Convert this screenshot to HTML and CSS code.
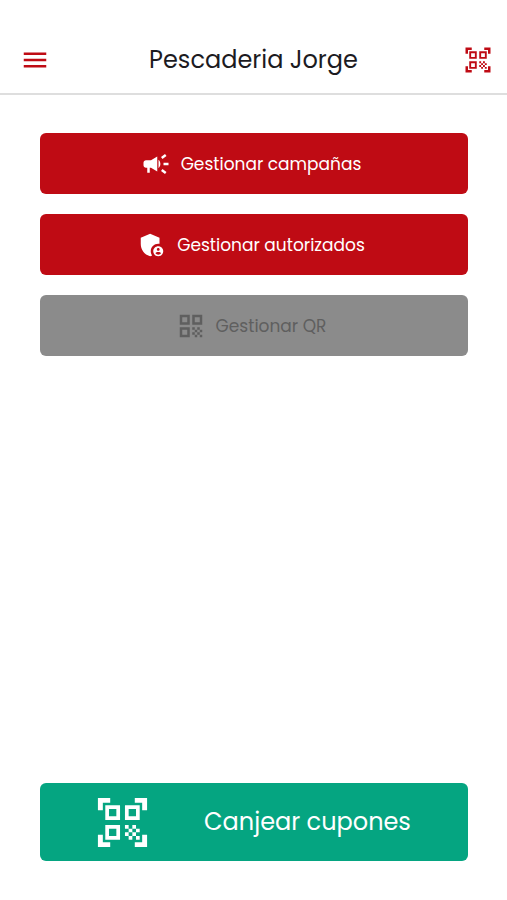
FILE: index.html
```html
<!DOCTYPE html>
<html lang="es">
<head>
<meta charset="utf-8">
<meta name="viewport" content="width=device-width, initial-scale=1">
<title>Pescaderia Jorge</title>
<link rel="stylesheet" href="styles.css">
</head>
<body>
<svg class="sprite" aria-hidden="true">
  <symbol id="scanner" viewBox="0 0 24 24"><path d="M9.5 6.5v3h-3v-3h3M11 5H5v6h6V5zm-1.500 9.500v3h-3v-3h3M11 13H5v6h6v-6zm6.500-6.500v3h-3v-3h3M19 5h-6v6h6V5zm-6 8h1.500v1.500H13V13zm1.500 1.500H16V16h-1.500v-1.500zM16 13h1.500v1.500H16V13zm-3 3h1.500v1.500H13V16zm1.500 1.500H16V19h-1.500v-1.500zM16 16h1.500v1.500H16V16zm1.500-1.500H19V16h-1.500v-1.500zm0 3H19V19h-1.500v-1.500zM22 7h-2V4h-3V2h5v5zm0 15v-5h-2v3h-3v2h5zM2 22h5v-2H4v-3H2v5zM2 2v5h2V4h3V2H2z"/></symbol>
</svg>
<header class="topbar">
  <button class="icon-button" type="button" aria-label="Menú">
    <svg class="icon" viewBox="0 0 24 24"><path d="M3 18h18v-2H3v2zm0-5h18v-2H3v2zm0-7v2h18V6H3z"/></svg>
  </button>
  <h1 class="title">Pescaderia Jorge</h1>
  <button class="icon-button" type="button" aria-label="Escanear QR">
    <svg class="icon"><use href="#scanner"/></svg>
  </button>
</header>
<main class="content">
  <button class="action" type="button">
    <svg class="icon" viewBox="0 0 24 24"><path d="M18 11v2h4v-2h-4zm-2 6.610c.96.71 2.210 1.650 3.200 2.390.4-.53.8-1.070 1.200-1.600-.99-.74-2.240-1.680-3.200-2.400-.4.54-.8 1.080-1.200 1.610zM20.400 5.600c-.4-.53-.8-1.070-1.200-1.600-.99.74-2.240 1.680-3.200 2.400.4.53.8 1.070 1.200 1.600.96-.72 2.210-1.650 3.200-2.400zM4 9c-1.100 0-2 .9-2 2v2c0 1.100.9 2 2 2h1v4h2v-4h1l5 3V6L8 9H4zm11.500 3c0-1.330-.58-2.530-1.500-3.350v6.690c.92-.81 1.500-2.010 1.500-3.340z"/></svg>
    <span>Gestionar campañas</span>
  </button>
  <button class="action" type="button">
    <svg class="icon" viewBox="0 0 24 24"><path d="M17 11c.34 0 .67.04 1 .09V6.270L10.500 3 3 6.270v4.910c0 4.540 3.200 8.790 7.500 9.820.55-.13 1.080-.32 1.600-.55-.69-.98-1.100-2.170-1.100-3.450 0-3.310 2.690-6 6-6z"/><path d="M17 13c-2.210 0-4 1.790-4 4s1.790 4 4 4 4-1.790 4-4-1.790-4-4-4zm0 1.380c.62 0 1.120.51 1.120 1.120s-.51 1.120-1.120 1.120-1.120-.51-1.120-1.120.5-1.120 1.120-1.120zm0 5.370c-.93 0-1.740-.46-2.240-1.170.05-.72 1.510-1.080 2.240-1.080s2.190.36 2.240 1.080c-.5.71-1.310 1.170-2.240 1.170z"/></svg>
    <span>Gestionar autorizados</span>
  </button>
  <button class="action" type="button" disabled>
    <svg class="icon" viewBox="0 0 24 24"><path d="M3 11h8V3H3v8zm2-6h4v4H5V5zM3 21h8v-8H3v8zm2-6h4v4H5v-4zm8-12v8h8V3h-8zm6 6h-4V5h4v4zM19 19h2v2h-2zM13 13h2v2h-2zM15 15h2v2h-2zM13 17h2v2h-2zM15 19h2v2h-2zM17 17h2v2h-2zM17 13h2v2h-2zM19 15h2v2h-2z"/></svg>
    <span>Gestionar QR</span>
  </button>
  <button class="action redeem" type="button">
    <svg class="icon"><use href="#scanner"/></svg>
    <span>Canjear cupones</span>
  </button>
</main>
</body>
</html>
```
FILE: styles.css
```css
* {
  box-sizing: border-box;
}

body {
  margin: 0;
  min-height: 100vh;
  display: flex;
  flex-direction: column;
  background: #fff;
  color: #1c1b1f;
  font-family: Poppins, Inter, sans-serif;
}

button {
  margin: 0;
  border: 0;
  font: inherit;
  cursor: pointer;
}

.sprite {
  position: absolute;
  width: 0;
  height: 0;
}

.icon {
  display: block;
  flex: none;
  width: 30px;
  height: 30px;
  fill: currentColor;
}

.topbar {
  display: flex;
  align-items: center;
  padding: 36px 14px 9px 20px;
  border-bottom: 2px solid #dedede;
}

.title {
  flex: 1;
  margin: 0;
  padding-right: 6px;
  text-align: center;
  font-size: 24px;
  line-height: 48px;
  font-weight: 400;
}

.icon-button {
  padding: 0;
  background: none;
  color: #bf0b14;
}

.content {
  flex: 1;
  display: flex;
  flex-direction: column;
  gap: 20px;
  padding: 38px 39px 39px 40px;
}

.action {
  display: flex;
  align-items: center;
  justify-content: center;
  gap: 10px;
  min-height: 61px;
  padding: 0 22px 0 16px;
  border-radius: 6px;
  background: #bf0b14;
  color: #fff;
  font-size: 17px;
  line-height: 28px;
}

.action:disabled {
  background: #8b8b8b;
  color: #5f5f5f;
  cursor: default;
}

.redeem {
  gap: 52px;
  min-height: 78px;
  margin-top: auto;
  padding: 0 20px 0 16px;
  background: #05a581;
  font-size: 24px;
}

.redeem .icon {
  width: 59px;
  height: 59px;
}
```
